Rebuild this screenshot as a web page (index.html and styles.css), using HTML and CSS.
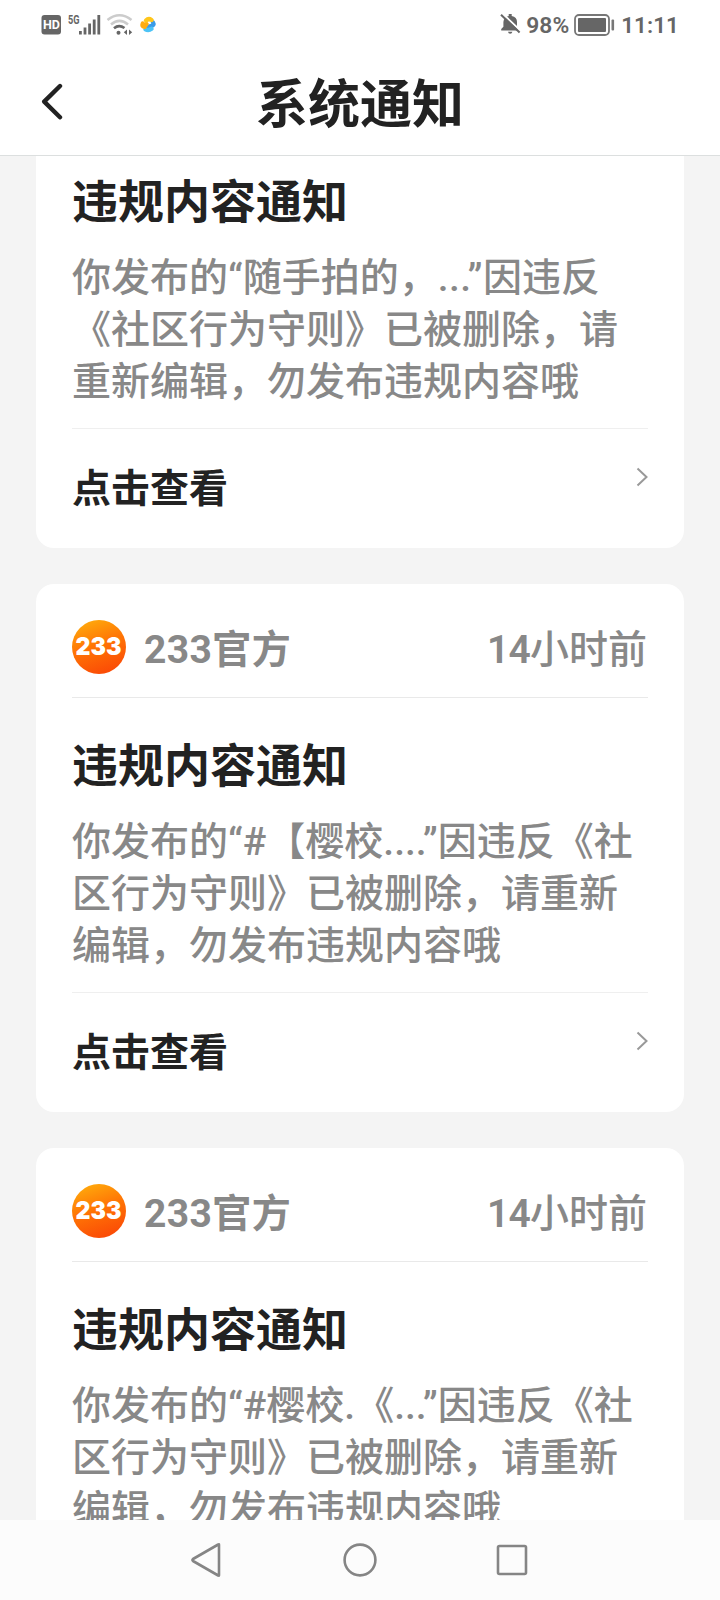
FILE: index.html
```html
<!DOCTYPE html>
<html lang="zh-CN">
<head>
<meta charset="utf-8">
<title>系统通知</title>
<link rel="stylesheet" href="styles.css">
</head>
<body>
<svg class="defs" width="0" height="0">
  <defs>
    <linearGradient id="logo-fill" x1="0.15" y1="0" x2="0.5" y2="1">
      <stop offset="0" stop-color="#ffae0c"/>
      <stop offset="0.5" stop-color="#ff7505"/>
      <stop offset="1" stop-color="#fb4d06"/>
    </linearGradient>
    <symbol id="logo" viewBox="0 0 54 54">
      <circle cx="27" cy="27" r="27" fill="url(#logo-fill)"/>
      <text class="logo-text" x="3.600" y="35.4" textLength="45.8" lengthAdjust="spacingAndGlyphs">233</text>
    </symbol>
    <symbol id="chevron" viewBox="0 0 12 20">
      <path d="M1.5 1.5L10.5 10L1.5 18.5" fill="none" stroke="#999" stroke-width="2"/>
    </symbol>
  </defs>
</svg>
<div class="screen">
  <header class="top">
    <div class="status">
      <div class="status-left">
        <svg width="120" height="30" viewBox="0 0 120 30">
          <rect x="0.5" y="5" width="19.500" height="19.500" rx="3" fill="#666"/>
          <text class="hd" x="2" y="19.4" textLength="17" lengthAdjust="spacingAndGlyphs">HD</text>
          <text class="net" x="27" y="14" textLength="11.5" lengthAdjust="spacingAndGlyphs">5G</text>
          <g fill="#666">
            <rect x="38" y="21" width="2.8" height="3.5"/>
            <rect x="42.6" y="17.5" width="2.8" height="7"/>
            <rect x="47.2" y="13.5" width="2.8" height="11"/>
            <rect x="51.8" y="9.5" width="2.8" height="15"/>
            <rect x="56.4" y="5" width="2.8" height="19.5"/>
          </g>
          <g fill="none" stroke-width="2.6">
            <path d="M66.5 10Q78.5 .5 90.5 10" stroke="#ccc"/>
            <path d="M70 14.4Q78.5 7.5 87 14.4" stroke="#ccc"/>
            <path d="M73 18.2Q78 14 83.5 18" stroke="#666"/>
          </g>
          <circle cx="77.5" cy="22.7" r="2" fill="#666"/>
          <path d="M86 19.5V25L82.8 22.3ZM88 19.5V25L91.2 22.3Z" fill="#666"/>
          <g fill="none" stroke-width="4.4" stroke-linecap="round">
            <path d="M112 12.6Q113.500 15 110.500 16L107 16.800" stroke="#3a9be8"/>
            <path d="M104.500 19.300Q107.500 21 110.500 18.800" stroke="#4cc3f6"/>
            <path d="M101.800 13.500Q100.500 16.500 103.500 16.800L105.500 14" stroke="#ffac12"/>
            <path d="M105 10.500Q107.500 8 110.500 10" stroke="#ffc61a"/>
          </g>
        </svg>
      </div>
      <div class="status-right">
        <svg width="21" height="22" viewBox="0 0 21 22">
          <path d="M1.2 17.5V16L3.4 13.8V9Q3.8 4 8.7 2.9V1H11.7V2.9Q17 4 17 9V13.8L18.6 15.8V17.5ZM8 18.8H12.4Q12 20.8 10.2 20.8T8 18.8Z" fill="#666"/>
          <path d="M2.8 .8L20.8 18" stroke="#fff" stroke-width="2"/>
          <path d="M1 1.8L19.6 19.4" stroke="#666" stroke-width="2"/>
        </svg>
        <span class="pct">98%</span>
        <svg class="battery" width="41" height="22" viewBox="0 0 41 22">
          <rect x="1" y="1" width="34" height="20" rx="4" fill="none" stroke="#777" stroke-width="1.8"/>
          <rect x="4" y="4" width="28" height="14" rx="1" fill="#666"/>
          <rect x="37.5" y="5.5" width="2.6" height="11" rx="1" fill="#777"/>
        </svg>
        <span class="clock">11:11</span>
      </div>
    </div>
    <div class="titlebar">
      <svg class="back" width="24" height="38" viewBox="0 0 24 38">
        <path d="M20 3L4.2 18.6L20 34.300" fill="none" stroke="#222" stroke-width="4.4" stroke-linecap="round" stroke-linejoin="round"/>
      </svg>
      <h1 class="heading">系统通知</h1>
    </div>
  </header>
  <main class="feed">
    <article class="card card-cut">
      <h2 class="card-title">违规内容通知</h2>
      <p class="card-body">你发布的“随手拍的，<span class="dots">...”</span>因违反<br>《社区行为守则》已被删除，请<br>重新编辑，勿发布违规内容哦</p>
      <div class="card-link"><span>点击查看</span><svg width="12" height="20"><use href="#chevron"/></svg></div>
    </article>
    <article class="card">
      <div class="card-head"><svg width="54" height="54"><use href="#logo"/></svg><span class="sender">233官方</span><span class="time"><b>14</b>小时前</span></div>
      <h2 class="card-title">违规内容通知</h2>
      <p class="card-body">你发布的“#【樱校....”因违反《社<br>区行为守则》已被删除，请重新<br>编辑，勿发布违规内容哦</p>
      <div class="card-link"><span>点击查看</span><svg width="12" height="20"><use href="#chevron"/></svg></div>
    </article>
    <article class="card">
      <div class="card-head"><svg width="54" height="54"><use href="#logo"/></svg><span class="sender">233官方</span><span class="time"><b>14</b>小时前</span></div>
      <h2 class="card-title">违规内容通知</h2>
      <p class="card-body">你发布的“#樱校.《...”因违反《社<br>区行为守则》已被删除，请重新<br>编辑，勿发布违规内容哦</p>
      <div class="card-link"><span>点击查看</span><svg width="12" height="20"><use href="#chevron"/></svg></div>
    </article>
  </main>
  <nav class="navbar">
    <svg width="34" height="36" viewBox="0 0 34 36"><path d="M29 2.8V33.2Q29 34 28.2 33.5L3 19Q1.8 18 3 17L28.2 2.5Q29 2 29 2.8Z" fill="none" stroke="#858585" stroke-width="2.6" stroke-linejoin="round"/></svg>
    <svg width="36" height="36" viewBox="0 0 36 36"><circle cx="18" cy="18" r="15.4" fill="none" stroke="#858585" stroke-width="2.6"/></svg>
    <svg width="34" height="36" viewBox="0 0 34 36"><rect x="2" y="4" width="28" height="28" rx="1.5" fill="none" stroke="#858585" stroke-width="2.6"/></svg>
  </nav>
</div>
</body>
</html>
```
FILE: styles.css
```css
* { box-sizing: border-box; }
body {
  margin: 0;
  background: #f4f4f4;
  font-family: Roboto, "Noto Sans CJK SC", sans-serif;
  text-spacing-trim: space-all;
}
svg { display: block; flex: none; }
.defs { position: absolute; }
.logo-text { font: 900 24px Inter, sans-serif; fill: #fff; }
.screen {
  width: 720px;
  height: 1600px;
  display: flex;
  flex-direction: column;
  overflow: hidden;
}
.top {
  height: 156px;
  flex: none;
  background: #fff;
  border-bottom: 1px solid #dcdfdf;
}
.status {
  height: 48px;
  padding: 0 41px 0 41px;
  display: flex;
  justify-content: space-between;
  align-items: center;
}
.status-left { padding-top: 1px; }
.status-right {
  display: flex;
  align-items: center;
  color: #666;
  font-size: 23px;
  font-weight: 600;
  line-height: 50px;
}
.pct { margin: 4px 5px 0 5px; font-size: 22.8px; }
.battery { margin-top: 1px; }
.clock { margin: 4px 0 0 6px; font-size: 22.6px; }
.hd { font: 700 13.5px Roboto, sans-serif; fill: #fff; }
.net { font: 700 13px Roboto, sans-serif; fill: #666; }
.titlebar {
  height: 107px;
  display: grid;
  grid-template-columns: 36px 1fr 36px;
  align-items: center;
  padding: 0 40px;
}
.heading {
  margin: 0;
  padding-top: 8px;
  color: #222;
  font-size: 52px;
  font-weight: 700;
  line-height: 99px;
  text-align: center;
}
.feed {
  flex: 1;
  min-height: 0;
  overflow: hidden;
  display: flex;
  flex-direction: column;
  gap: 36px;
  padding: 0 36px;
}
.card {
  flex: none;
  height: 528px;
  padding: 0 36px;
  background: #fff;
  border-radius: 18px;
}
.card-cut {
  height: 392px;
  border-radius: 0 0 18px 18px;
}
.card-cut .card-title { margin-top: 10px; }
.card-head {
  height: 114px;
  display: flex;
  align-items: center;
  padding-top: 12px;
  border-bottom: 1px solid #e9e9e9;
  color: #888;
  font-size: 39px;
  line-height: 60px;
}
.sender {
  margin: 7px 0 0 18px;
  font-weight: 700;
  letter-spacing: 0.4px;
}
.time { margin: 7px 1px 0 auto; font-weight: 500; }
.time b { font-weight: 600; letter-spacing: -0.8px; }
.card-title {
  margin: 32px 0 0;
  color: #222;
  font-size: 46px;
  font-weight: 700;
  line-height: 72px;
}
.card-body {
  margin: 14px 0 0;
  padding-bottom: 20px;
  border-bottom: 1px solid #efefef;
  color: #888;
  font-size: 39px;
  font-weight: 500;
  line-height: 52px;
  white-space: nowrap;
}
.dots { letter-spacing: 0.4px; }
.card-link {
  display: flex;
  justify-content: space-between;
  align-items: flex-start;
  padding-top: 30px;
  color: #222;
  font-size: 39px;
  font-weight: 700;
  line-height: 60px;
}
.card-link svg { margin-top: 8px; }
.navbar {
  height: 80px;
  flex: none;
  display: flex;
  justify-content: center;
  gap: 118px;
  align-items: center;
  background: #fcfcfc;
}
```
